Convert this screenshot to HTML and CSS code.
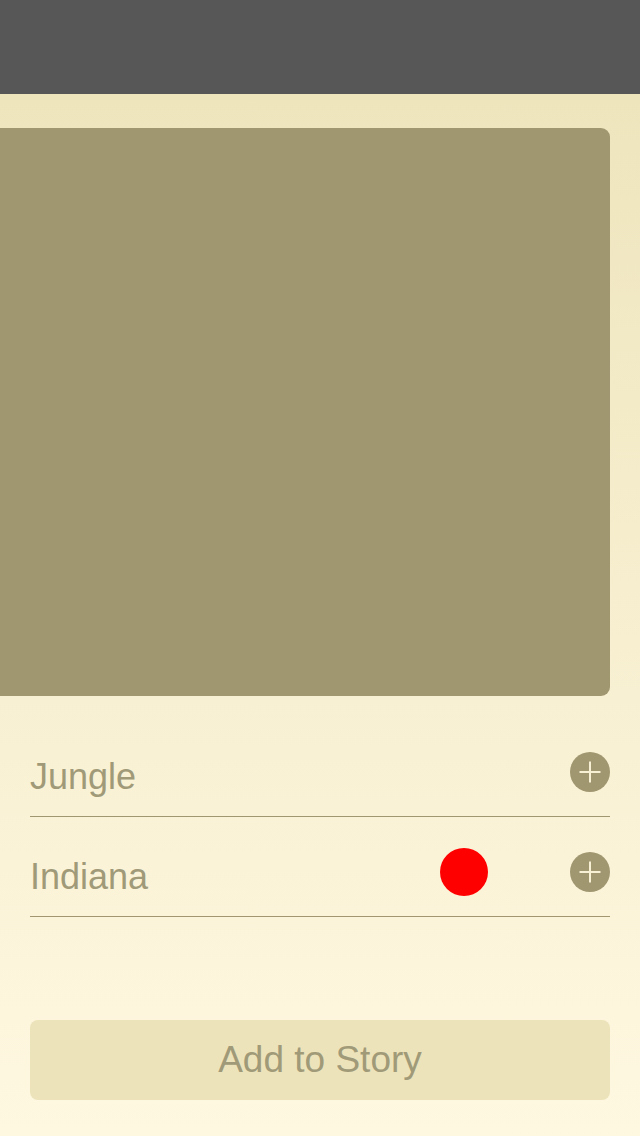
FILE: index.html
```html
<!DOCTYPE html>
<html>
<head>
<meta charset="utf-8">
<link rel="stylesheet" href="styles.css">
</head>
<body>
<div class="topbar"></div>
<main class="content">
  <div class="card"></div>
  <div class="list">
    <div class="row">
      <span class="label">Jungle</span>
      <span class="add">
        <svg width="40" height="40" viewBox="0 0 40 40"><circle cx="20" cy="20" r="20" fill="#A09670"/><path d="M20 9.5V30.5M9.5 20H30.5" stroke="#F8F0D4" stroke-width="2"/></svg>
      </span>
    </div>
    <div class="row">
      <span class="label">Indiana</span>
      <span class="dot"></span>
      <span class="add">
        <svg width="40" height="40" viewBox="0 0 40 40"><circle cx="20" cy="20" r="20" fill="#A09670"/><path d="M20 9.5V30.5M9.5 20H30.5" stroke="#F8F0D4" stroke-width="2"/></svg>
      </span>
    </div>
  </div>
  <button class="story-btn">Add to Story</button>
</main>
</body>
</html>
```
FILE: styles.css
```css
html, body {
  margin: 0;
  padding: 0;
}
body {
  width: 640px;
  height: 1136px;
  overflow: hidden;
  font-family: "Liberation Sans", Arial, sans-serif;
  background: linear-gradient(to bottom, #EEE5BD 94px, #FFF8E1 1136px);
  display: flex;
  flex-direction: column;
}
.topbar {
  height: 94px;
  background: #575757;
  flex: none;
}
.content {
  flex: 1;
  display: flex;
  flex-direction: column;
  padding: 34px 30px 0 30px;
}
.card {
  margin-left: -40px;
  width: 620px;
  height: 568px;
  background: #A09670;
  border-radius: 9px;
}
.list {
  margin-top: 21px;
  display: flex;
  flex-direction: column;
}
.row {
  border-bottom: 1px solid #A09670;
  display: flex;
  align-items: center;
  padding-top: 11px;
  box-sizing: border-box;
  height: 100px;
}
.label {
  flex: 1;
  font-size: 36px;
  color: #A09A78;
  padding-top: 9px;
}
.dot {
  width: 48px;
  height: 48px;
  border-radius: 50%;
  background: #FF0000;
  margin-right: 82px;
}
.add {
  width: 40px;
  height: 40px;
  display: block;
}
.add svg {
  display: block;
}
.story-btn {
  margin-top: 103px;
  height: 80px;
  border: none;
  border-radius: 8px;
  background: #EDE3BA;
  color: #A09A78;
  font-family: "Liberation Sans", Arial, sans-serif;
  font-size: 37px;
  padding: 0;
}
```
